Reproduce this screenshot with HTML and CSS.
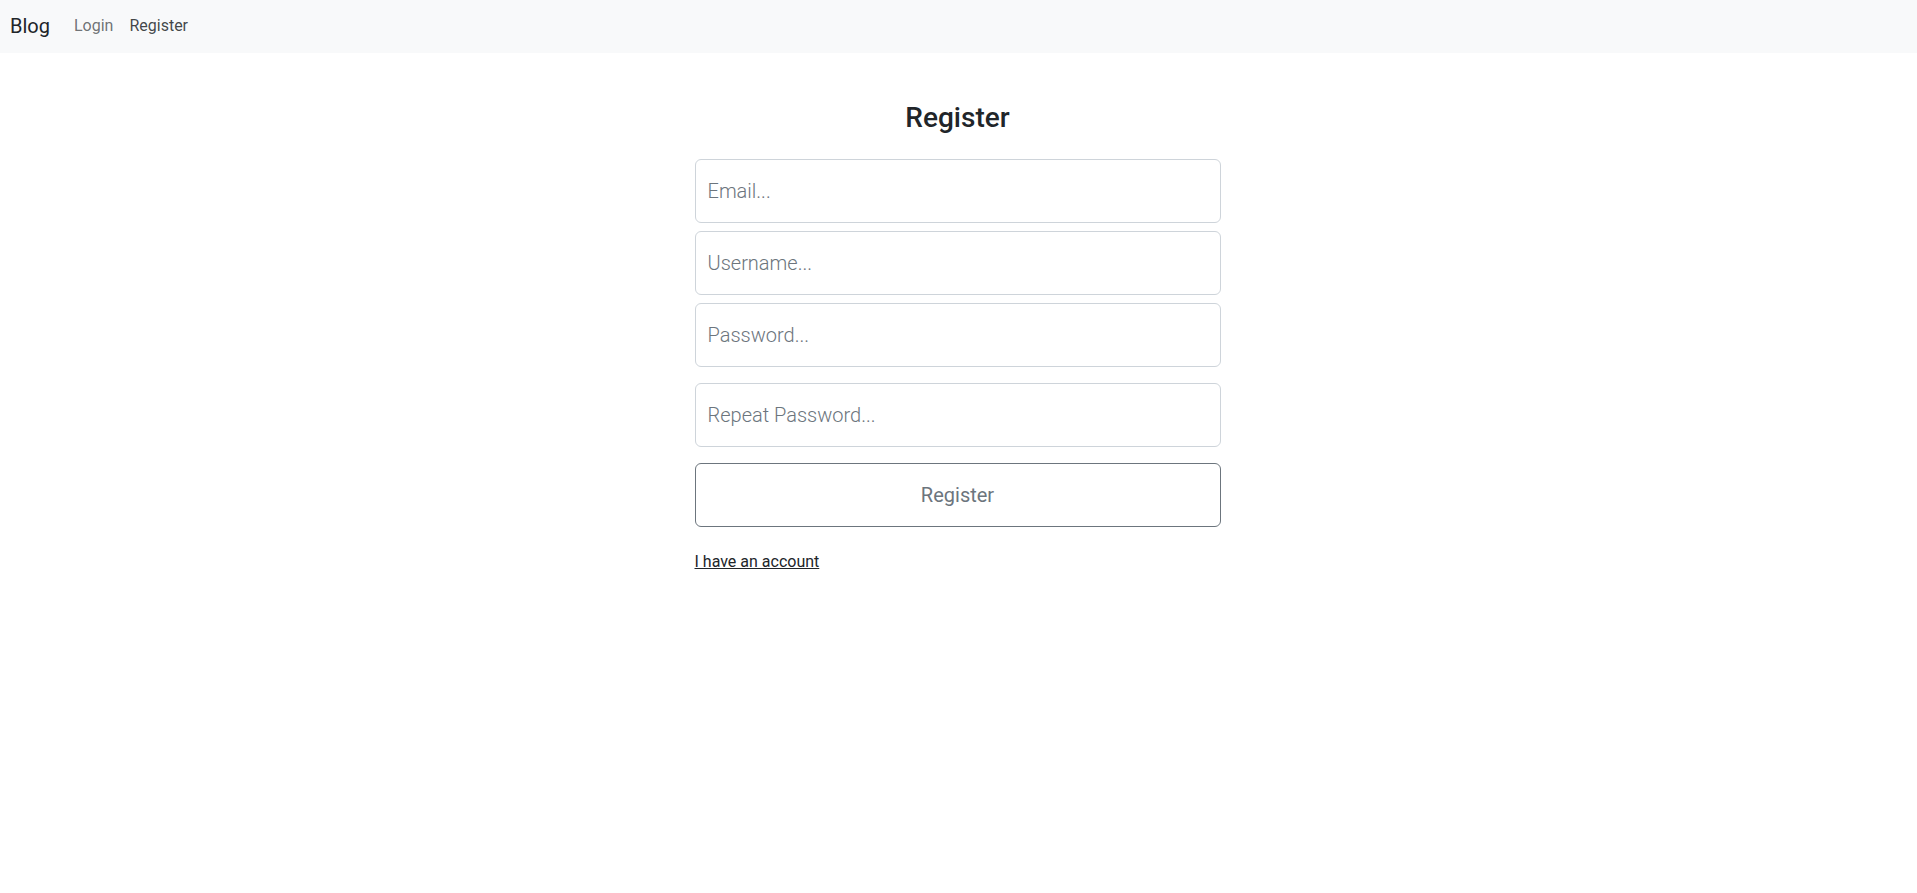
FILE: index.html
```html
<!DOCTYPE html>
<html lang="en">
<head>
<meta charset="utf-8">
<title>Register</title>
<link rel="stylesheet" href="styles.css">
</head>
<body>
<nav class="navbar">
  <a class="brand" href="#">Blog</a>
  <ul class="nav">
    <li><a class="nav-link" href="#">Login</a></li>
    <li><a class="nav-link active" href="#">Register</a></li>
  </ul>
</nav>
<main class="main">
  <form class="form">
    <h1 class="title">Register</h1>
    <input class="field" type="email" placeholder="Email...">
    <input class="field" type="text" placeholder="Username...">
    <input class="field" type="password" placeholder="Password...">
    <div class="spacer"></div>
    <input class="field" type="password" placeholder="Repeat Password...">
    <button class="btn" type="button">Register</button>
    <a class="link" href="#">I have an account</a>
  </form>
</main>
</body>
</html>
```
FILE: styles.css
```css
* { box-sizing: border-box; }
html, body { margin: 0; padding: 0; }
body {
  font-family: Roboto, "Liberation Sans", Arial, sans-serif;
  color: #212529;
  background: #fff;
  font-size: 16px;
  line-height: 1.5;
}
.navbar {
  height: 53px;
  background: #f8f9fa;
  display: flex;
  align-items: center;
  padding: 0 10px 1px;
}
.brand {
  font-size: 20px;
  line-height: 30px;
  color: #212529;
  text-decoration: none;
  margin-right: 16px;
}
.nav {
  display: flex;
  list-style: none;
  margin: 0;
  padding: 0;
}
.nav-link {
  display: block;
  padding: 8px;
  font-size: 16px;
  line-height: 24px;
  color: rgba(33, 37, 41, 0.65);
  text-decoration: none;
}
.nav-link.active { color: rgba(33, 37, 41, 0.85); }
.main {
  display: flex;
  justify-content: center;
  padding-top: 48px;
  padding-right: 2px;
}
.form {
  width: 526px;
  display: flex;
  flex-direction: column;
}
.title {
  margin: 0 0 24px;
  text-align: center;
  font-size: 28px;
  font-weight: 500;
  line-height: 1.2;
}
.field {
  height: 64px;
  width: 100%;
  margin: 0 0 8px;
  padding: 0 12px;
  font-family: inherit;
  font-size: 20px;
  font-weight: 300;
  color: #212529;
  border: 1px solid #ced4da;
  border-radius: 6px;
  background: #fff;
}
.field::placeholder { color: #6c757d; opacity: 1; }
.spacer { height: 8px; }
.btn {
  height: 64px;
  width: 100%;
  margin-top: 8px;
  font-family: inherit;
  font-size: 20px;
  font-weight: 400;
  color: #6c757d;
  background: #fff;
  border: 1px solid #6c757d;
  border-radius: 6px;
}
.link {
  margin-top: 23px;
  align-self: flex-start;
  font-size: 16px;
  line-height: 24px;
  color: #212529;
  text-decoration: underline;
}
```
